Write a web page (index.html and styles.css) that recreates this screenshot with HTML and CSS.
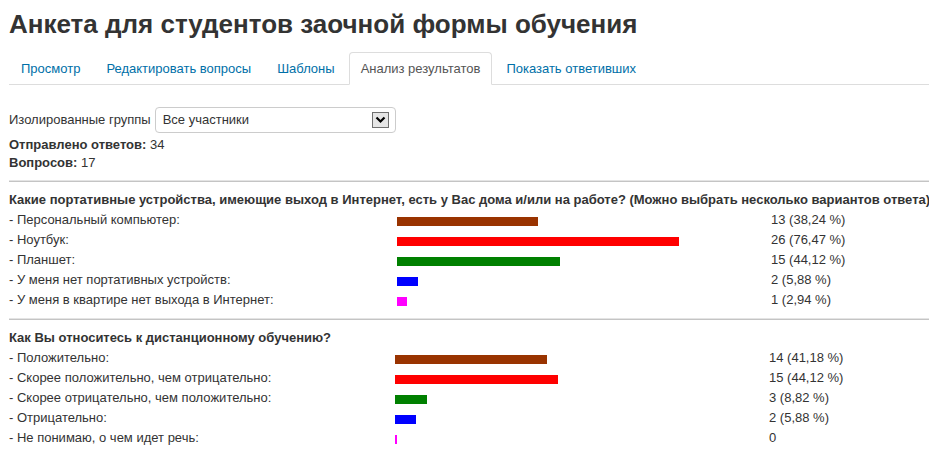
FILE: index.html
```html
<!DOCTYPE html>
<html lang="ru">
<head>
<meta charset="utf-8">
<title>Анкета для студентов заочной формы обучения</title>
<link rel="stylesheet" href="styles.css">
</head>
<body>
<div class="page">
  <h2 class="page-title">Анкета для студентов заочной формы обучения</h2>

  <ul class="tabs">
    <li class="tab"><a href="#">Просмотр</a></li>
    <li class="tab"><a href="#">Редактировать вопросы</a></li>
    <li class="tab"><a href="#">Шаблоны</a></li>
    <li class="tab active"><a href="#">Анализ результатов</a></li>
    <li class="tab"><a href="#">Показать ответивших</a></li>
  </ul>

  <div class="groups">
    <label class="groups-label">Изолированные группы</label>
    <div class="select">
      <span class="select-value">Все участники</span>
      <span class="select-arrow">
        <svg width="11" height="8" viewBox="0 0 11 8"><path d="M1.5 1.5 L5.5 5.5 L9.5 1.5" fill="none" stroke="#000" stroke-width="2.2"/></svg>
      </span>
    </div>
  </div>

  <div class="stats">
    <div><b>Отправлено ответов:</b> 34</div>
    <div><b>Вопросов:</b> 17</div>
  </div>

  <section class="question q-wide">
    <h3 class="question-title">Какие портативные устройства, имеющие выход в Интернет, есть у Вас дома и/или на работе? (Можно выбрать несколько вариантов ответа)</h3>
    <div class="results">
      <div class="label">- Персональный компьютер:</div>
      <div class="bar-cell"><span class="bar c1" style="width:141px"></span></div>
      <div class="value">13 (38,24 %)</div>

      <div class="label">- Ноутбук:</div>
      <div class="bar-cell"><span class="bar c2" style="width:282px"></span></div>
      <div class="value">26 (76,47 %)</div>

      <div class="label">- Планшет:</div>
      <div class="bar-cell"><span class="bar c3" style="width:163px"></span></div>
      <div class="value">15 (44,12 %)</div>

      <div class="label">- У меня нет портативных устройств:</div>
      <div class="bar-cell"><span class="bar c4" style="width:21px"></span></div>
      <div class="value">2 (5,88 %)</div>

      <div class="label">- У меня в квартире нет выхода в Интернет:</div>
      <div class="bar-cell"><span class="bar c5" style="width:10px"></span></div>
      <div class="value">1 (2,94 %)</div>
    </div>
  </section>

  <section class="question q-narrow">
    <h3 class="question-title">Как Вы относитесь к дистанционному обучению?</h3>
    <div class="results">
      <div class="label">- Положительно:</div>
      <div class="bar-cell"><span class="bar c1" style="width:152px"></span></div>
      <div class="value">14 (41,18 %)</div>

      <div class="label">- Скорее положительно, чем отрицательно:</div>
      <div class="bar-cell"><span class="bar c2" style="width:163px"></span></div>
      <div class="value">15 (44,12 %)</div>

      <div class="label">- Скорее отрицательно, чем положительно:</div>
      <div class="bar-cell"><span class="bar c3" style="width:32px"></span></div>
      <div class="value">3 (8,82 %)</div>

      <div class="label">- Отрицательно:</div>
      <div class="bar-cell"><span class="bar c4" style="width:21px"></span></div>
      <div class="value">2 (5,88 %)</div>

      <div class="label">- Не понимаю, о чем идет речь:</div>
      <div class="bar-cell"><span class="bar c5" style="width:2px"></span></div>
      <div class="value">0</div>
    </div>
  </section>
</div>
</body>
</html>
```

FILE: styles.css
```css
html, body {
  margin: 0;
  padding: 0;
  overflow: hidden;
  background: #fff;
}

body {
  font-family: "Liberation Sans", Arial, sans-serif;
  font-size: 13px;
  line-height: 18px;
  color: #333;
}

.page {
  width: 960px;
  padding-left: 9px;
}

/* heading */
.page-title {
  margin: 0;
  padding-top: 6px;
  font-size: 26px;
  line-height: 36px;
  font-weight: bold;
  color: #333;
}

/* tab strip */
.tabs {
  display: flex;
  list-style: none;
  margin: 10px 0 0;
  padding: 0;
  border-bottom: 1px solid #ddd;
}

.tab {
  margin-right: 2px;
  margin-bottom: -1px;
}

.tab a {
  display: block;
  padding: 7px 11px 6px;
  line-height: 18px;
  border: 1px solid transparent;
  border-radius: 4px 4px 0 0;
  color: #0070a8;
  text-decoration: none;
}

.tab.active a {
  color: #555;
  background: #fff;
  border-color: #ddd #ddd transparent;
}

/* group selector */
.groups {
  display: flex;
  align-items: center;
  margin-top: 22px;
}

.groups-label {
  margin-right: 4px;
}

.select {
  display: flex;
  align-items: center;
  justify-content: space-between;
  box-sizing: border-box;
  width: 241px;
  height: 26px;
  padding: 0 6px 0 7px;
  border: 1px solid #ccc;
  border-radius: 4px;
  background: #fff;
}

.select-arrow {
  display: flex;
  align-items: center;
  justify-content: center;
  box-sizing: border-box;
  width: 17px;
  height: 16px;
  border: 1px solid #707070;
  background: #e6e6e6;
}

/* summary */
.stats {
  margin-top: 3px;
}

/* question blocks */
.question {
  border-top: 1px solid #c4c4c4;
  margin-top: 9px;
  padding-top: 8px;
  box-shadow: 0 -1px 0 #e4e4e4;
}

.question-title {
  margin: 0;
  font-size: 13px;
  line-height: 20px;
  font-weight: bold;
  white-space: nowrap;
}

.results {
  display: grid;
  grid-auto-rows: 20px;
  align-items: center;
}

.q-wide .results {
  grid-template-columns: 388px 374px auto;
}

.q-narrow .results {
  grid-template-columns: 386px 374px auto;
}

.bar-cell {
  display: flex;
  align-items: center;
}

.bar {
  display: block;
  height: 9px;
  margin-top: 2px;
}

.c1 { background: #993300; }
.c2 { background: #ff0000; }
.c3 { background: #008000; }
.c4 { background: #0000ff; }
.c5 { background: #ff00ff; }
```
